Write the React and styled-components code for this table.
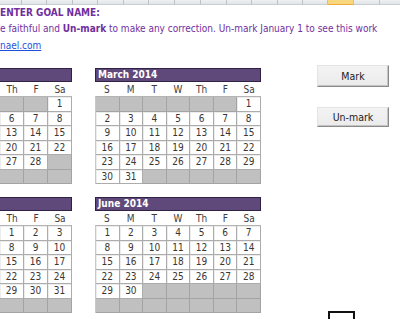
import React from "react";
import styled, { createGlobalStyle } from "styled-components";

const GlobalStyle = createGlobalStyle`
  html, body { margin: 0; padding: 0; background: #fff; }
  body { overflow: hidden; }
`;

const FONT = `"DejaVu Sans Condensed", "DejaVu Sans", sans-serif`;

const Page = styled.div`
  width: 400px;
  height: 319px;
  overflow: hidden;
  background: #fff;
  font-family: ${FONT};
`;

const ColumnStrip = styled.div`
  display: flex;
  height: 5px;
  overflow: hidden;
  background: #e3e6ea;
`;

const ColHead = styled.div`
  flex: 0 0 ${(p) => p.$w}px;
  box-sizing: border-box;
  height: 5px;
  border-right: 1px solid #bcc1c8;
  border-bottom: 1px solid ${(p) => (p.$active ? "#f0a93a" : "#c9ced5")};
  background: ${(p) => (p.$active ? "#f8d77f" : "linear-gradient(#eef0f2, #e1e4e8)")};
`;

const Notes = styled.div`
  height: 60px;
  box-sizing: border-box;
  padding-top: 0;
  color: #7030a0;
`;

const Line = styled.div`
  height: ${(p) => p.$h || 16}px;
  line-height: ${(p) => p.$h || 16}px;
  white-space: nowrap;
  font-size: 10px;
  font-weight: ${(p) => (p.$bold ? 700 : 400)};
`;

const Strong = styled.b`
  font-weight: 700;
`;

const Link = styled.a`
  color: #1f4fdc;
  text-decoration: underline;
`;

const Body = styled.div`
  display: flex;
  align-items: flex-start;
`;

const Calendars = styled.div`
  display: grid;
  grid-template-columns: 72px 166px;
  column-gap: 23px;
  row-gap: 13px;
  margin-top: 3px;
  flex: 0 0 auto;
`;

const Month = styled.div`
  display: flex;
  flex-direction: column;
`;

const MonthBar = styled.div`
  height: 14px;
  box-sizing: border-box;
  background: #5f497a;
  border: 1px solid #2f2245;
  border-left-width: ${(p) => (p.$cut ? 0 : 1)}px;
  color: #fff;
  font-weight: 700;
  font-size: 10px;
  line-height: 12px;
  padding-left: 2px;
  white-space: nowrap;
`;

const DayNames = styled.div`
  display: grid;
  grid-template-columns: repeat(${(p) => p.$n}, 1fr);
  height: 14px;
  line-height: 15px;
  font-size: 10px;
  color: #3c3c3c;
  text-align: center;
`;

const Grid = styled.div`
  display: grid;
  grid-template-columns: repeat(${(p) => p.$n}, 1fr);
  grid-template-rows: repeat(6, 1fr);
  height: 88px;
  box-sizing: border-box;
  border-top: 1px solid #b4b4b4;
  border-left: ${(p) => (p.$cut ? "none" : "1px solid #c8c8c8")};
`;

const Cell = styled.div`
  box-sizing: border-box;
  border-right: 1px solid ${(p) => (p.$empty ? "#a3a3a3" : "#acacac")};
  border-bottom: 1px solid ${(p) => (p.$empty ? "#a3a3a3" : "#acacac")};
  background: ${(p) => (p.$empty ? "#c0c0c0" : "#fff")};
  box-shadow: ${(p) => (p.$empty ? "none" : "inset 1px 1px 0 #ececec")};
  font-size: 10px;
  color: #3a3632;
  display: flex;
  align-items: center;
  justify-content: center;
`;

const Buttons = styled.div`
  display: flex;
  flex-direction: column;
  align-items: flex-start;
  margin-left: 56px;
  flex: 0 0 auto;
`;

const Button = styled.button`
  width: 72px;
  height: ${(p) => p.$h}px;
  margin-top: ${(p) => p.$mt}px;
  box-sizing: border-box;
  padding: 0;
  background: linear-gradient(#f3f3f3, #ebebeb);
  border: 1px solid;
  border-color: #e4e4e4 #8a8a8a #8a8a8a #e4e4e4;
  box-shadow: inset -1px -1px 0 #c4c4c4;
  font-family: ${FONT};
  font-size: 10.5px;
  color: #222;
`;

const Square = styled.div`
  width: 27px;
  height: 12px;
  margin-top: 184px;
  margin-left: 11px;
  box-sizing: border-box;
  border: 2px solid #111;
  border-bottom: none;
`;

// Visible part of the sheet: February/May show only their Th, F, Sa columns.
const months = [
  { name: "", start: 6, days: 28, cols: [4, 5, 6] },
  { name: "March 2014", start: 6, days: 31, cols: [0, 1, 2, 3, 4, 5, 6] },
  { name: "", start: 4, days: 31, cols: [4, 5, 6] },
  { name: "June 2014", start: 0, days: 30, cols: [0, 1, 2, 3, 4, 5, 6] },
];

const dayNames = ["S", "M", "T", "W", "Th", "F", "Sa"];
const colWidths = [22, 25, 26, 25, 26, 25, 26, 26, 26, 25, 26, 25, 25, 26, 26, 26];

function MonthCal({ m }) {
  const cut = m.cols.length < 7;
  const cells = [];
  for (let r = 0; r < 6; r++) {
    for (const c of m.cols) {
      const d = r * 7 + c - m.start + 1;
      cells.push(d >= 1 && d <= m.days ? d : null);
    }
  }
  return (
    <Month>
      <MonthBar $cut={cut}>{m.name}</MonthBar>
      <DayNames $n={m.cols.length}>
        {m.cols.map((c) => (
          <span key={c}>{dayNames[c]}</span>
        ))}
      </DayNames>
      <Grid $n={m.cols.length} $cut={cut}>
        {cells.map((d, i) => (
          <Cell key={i} $empty={d === null}>
            {d}
          </Cell>
        ))}
      </Grid>
    </Month>
  );
}

export default function App() {
  return (
    <Page>
      <GlobalStyle />
      <ColumnStrip>
        {colWidths.map((w, i) => (
          <ColHead key={i} $w={w} $active={i === 13} />
        ))}
      </ColumnStrip>
      <Notes>
        <Line $bold>ENTER GOAL NAME:</Line>
        <Line>
          e faithful and <Strong>Un-mark</Strong> to make any correction. Un-mark January 1 to see this work
        </Line>
        <Line $h={18}>
          <Link href="#">nael.com</Link>
        </Line>
      </Notes>
      <Body>
        <Calendars>
          {months.map((m, i) => (
            <MonthCal key={i} m={m} />
          ))}
        </Calendars>
        <Buttons>
          <Button $h={22} $mt={0}>Mark</Button>
          <Button $h={20} $mt={20}>Un-mark</Button>
          <Square />
        </Buttons>
      </Body>
    </Page>
  );
}
